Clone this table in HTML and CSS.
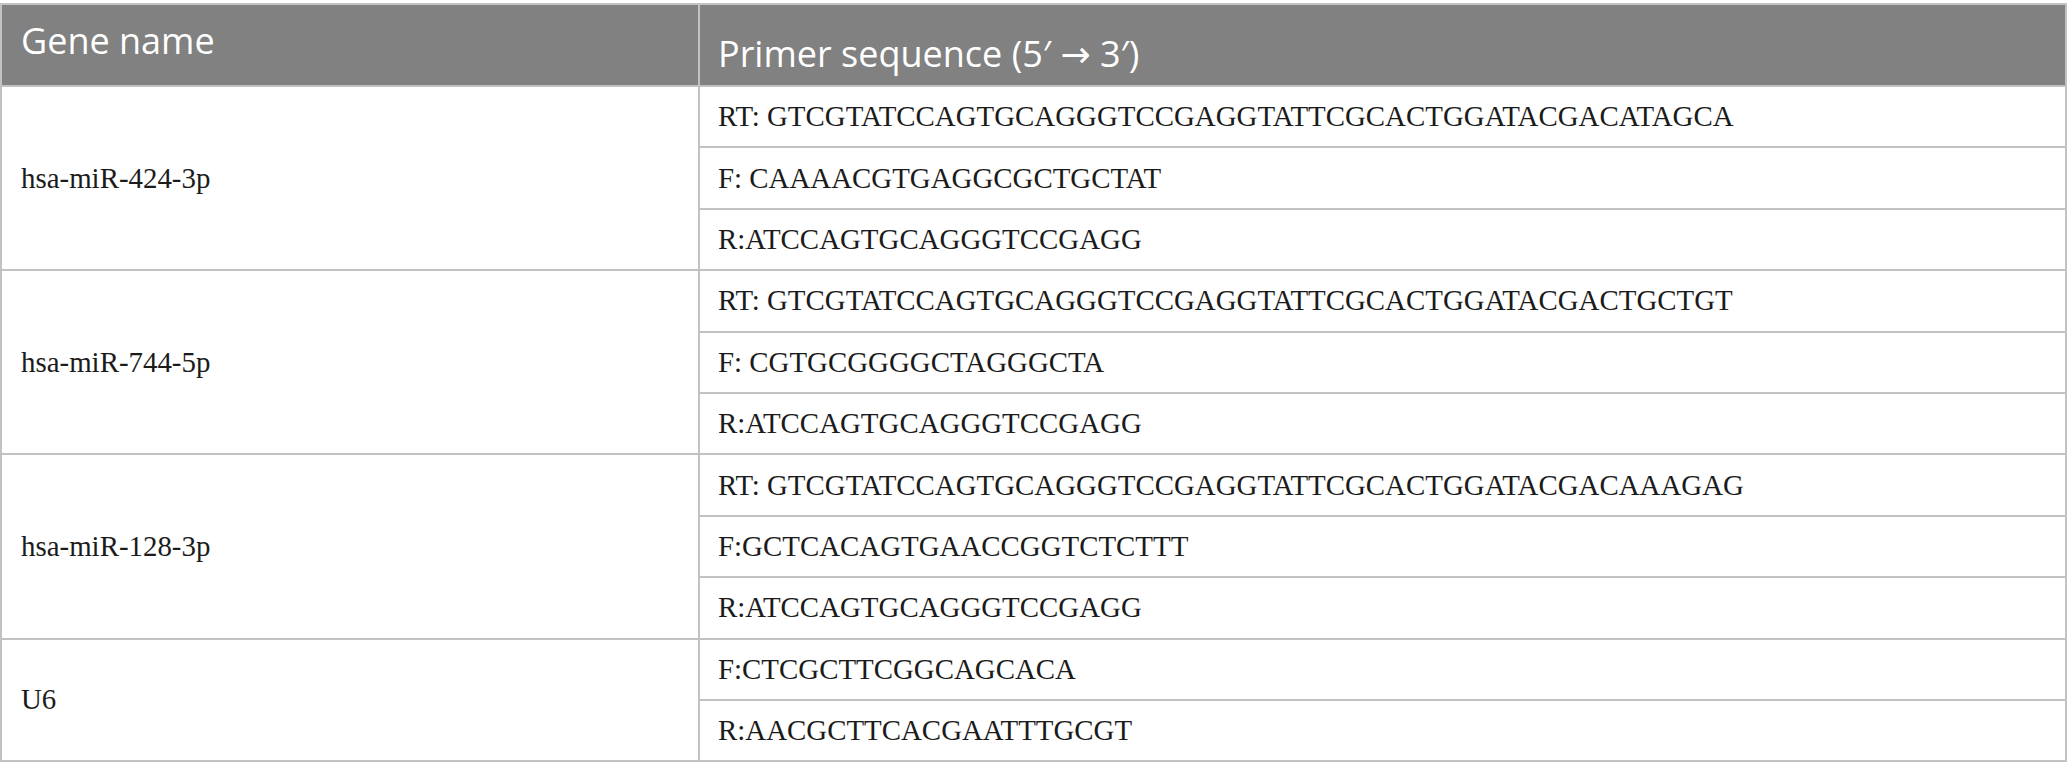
FILE: index.html
```html
<!DOCTYPE html>
<html lang="en">
<head>
<meta charset="utf-8">
<title>Primer sequences</title>
<link rel="stylesheet" href="styles.css">
</head>
<body>
<table class="primers">
  <colgroup>
    <col class="col-gene">
    <col class="col-seq">
  </colgroup>
  <thead>
    <tr class="head-row">
      <th class="th-gene">Gene name</th>
      <th class="th-seq">Primer sequence (5′ <span class="arrow">→</span> 3′)</th>
    </tr>
  </thead>
  <tbody>
    <tr class="sub"><td class="gene" rowspan="3">hsa-miR-424-3p</td><td class="seq">RT: GTCGTATCCAGTGCAGGGTCCGAGGTATTCGCACTGGATACGACATAGCA</td></tr>
    <tr class="sub"><td class="seq">F: CAAAACGTGAGGCGCTGCTAT</td></tr>
    <tr class="sub"><td class="seq">R:ATCCAGTGCAGGGTCCGAGG</td></tr>
    <tr class="sub"><td class="gene" rowspan="3">hsa-miR-744-5p</td><td class="seq">RT: GTCGTATCCAGTGCAGGGTCCGAGGTATTCGCACTGGATACGACTGCTGT</td></tr>
    <tr class="sub"><td class="seq">F: CGTGCGGGGCTAGGGCTA</td></tr>
    <tr class="sub"><td class="seq">R:ATCCAGTGCAGGGTCCGAGG</td></tr>
    <tr class="sub"><td class="gene" rowspan="3">hsa-miR-128-3p</td><td class="seq">RT: GTCGTATCCAGTGCAGGGTCCGAGGTATTCGCACTGGATACGACAAAGAG</td></tr>
    <tr class="sub"><td class="seq">F:GCTCACAGTGAACCGGTCTCTTT</td></tr>
    <tr class="sub"><td class="seq">R:ATCCAGTGCAGGGTCCGAGG</td></tr>
    <tr class="sub"><td class="gene" rowspan="2">U6</td><td class="seq">F:CTCGCTTCGGCAGCACA</td></tr>
    <tr class="sub"><td class="seq">R:AACGCTTCACGAATTTGCGT</td></tr>
  </tbody>
</table>
</body>
</html>
```

FILE: styles.css
```css
html, body {
  margin: 0;
  padding: 0;
  background: #ffffff;
}

body {
  padding-top: 3px;
}

.primers {
  border-collapse: collapse;
  width: 2067px;
  table-layout: fixed;
  border: 2px solid #c2c2c2;
}

.col-gene { width: 698px; }

.head-row th {
  background: #808180;
  color: #ffffff;
  font-family: "Open Sans", "Noto Sans", sans-serif;
  font-weight: 400;
  font-size: 36px;
  line-height: 40px;
  text-align: left;
  height: 82px;
  box-sizing: border-box;
  border: 2px solid #c2c2c2;
}

.th-gene {
  vertical-align: top;
  padding: 16px 18px 0 19px;
}

.th-seq {
  vertical-align: bottom;
  padding: 0 18px 11px 18px;
}

.arrow {
  font-family: "DejaVu Sans", sans-serif;
  font-size: 36px;
  line-height: 0;
}

.sub td {
  height: 61.4px;
  box-sizing: border-box;
  border: 2px solid #c2c2c2;
  font-family: "Liberation Serif", "Times New Roman", serif;
  font-size: 28.9px;
  color: #1b1b1b;
  vertical-align: middle;
  padding: 0 18px;
  white-space: nowrap;
}

.sub td.gene {
  padding-left: 19px;
}
```
